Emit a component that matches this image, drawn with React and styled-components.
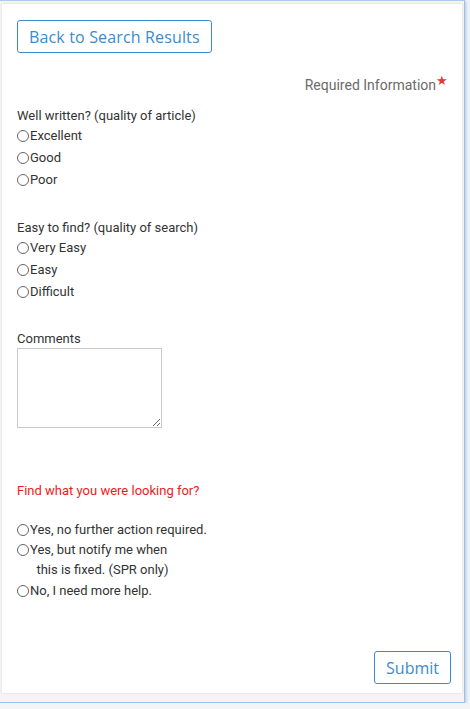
import styled, { createGlobalStyle } from "styled-components";

const GlobalStyle = createGlobalStyle`
  html, body {
    margin: 0;
    padding: 0;
    background: #f3f4f5;
  }
  body {
    font-family: Roboto, "Liberation Sans", sans-serif;
  }
`;

const Frame = styled.div`
  width: 465px;
  height: 703px;
  box-sizing: border-box;
  border-top: 1px solid #aacbeb;
  border-right: 1px solid #9cc1e6;
  border-bottom: 1px solid #9cc1e6;
  box-shadow: 1px 1px 3px rgba(120, 170, 220, 0.6);
  background: #f4f4f4;
  padding: 3px 2px 9px 2px;
`;

const Card = styled.form`
  height: 100%;
  box-sizing: border-box;
  background: #fff;
  box-shadow: 0 0 2px rgba(0, 0, 0, 0.12);
  padding: 16px 11px 9px 15px;
  display: flex;
  flex-direction: column;
  color: #333;
  font-size: 13px;
`;

const OutlineButton = styled.button`
  align-self: ${(p) => (p.$right ? "flex-end" : "flex-start")};
  font-family: "Open Sans", Roboto, sans-serif;
  font-size: 16px;
  letter-spacing: ${(p) => (p.$right ? 0 : 0.15)}px;
  color: #3a8ccc;
  background: #fff;
  border: 1px solid #3a8ccc;
  border-radius: 3px;
  height: 33px;
  padding: 0 ${(p) => (p.$right ? 11 : 11)}px;
  cursor: pointer;
`;

const Required = styled.div`
  align-self: flex-end;
  margin-top: 24px;
  margin-right: 3px;
  font-size: 14px;
  color: #6b6b6b;
  display: flex;
  align-items: flex-start;
`;

const Star = styled.span`
  color: #e03a3a;
  font-size: 13px;
  line-height: 1;
  margin-top: -3px;
`;

const Group = styled.fieldset`
  border: none;
  margin: ${(p) => p.$top}px 0 0 0;
  padding: 0;
  display: flex;
  flex-direction: column;
`;

const Question = styled.div`
  color: ${(p) => (p.$alert ? "#f01a1a" : "#333")};
  line-height: 17px;
  margin-bottom: ${(p) => p.$gap ?? 3}px;
`;

const Option = styled.label`
  display: flex;
  align-items: flex-start;
  line-height: ${(p) => p.$line || 17}px;
  margin-bottom: ${(p) => p.$gap ?? 5}px;
  color: #333;

  input {
    margin-top: ${(p) => ((p.$line || 17) - 13) / 2 + 0.5}px;
  }
`;

const Radio = styled.input.attrs({ type: "radio" })`
  appearance: none;
  width: 12px;
  height: 12px;
  margin: 2px 1px 0 0;
  border: 1px solid #666;
  border-radius: 50%;
  background: #fff;
  flex: none;
`;

const Comments = styled.textarea`
  width: 145px;
  height: 80px;
  box-sizing: border-box;
  border: 1px solid #c8c8c8;
  margin: 1px 0 0 0;
  resize: both;
`;

const Spacer = styled.div`
  flex: 1;
`;

export default function App() {
  return (
    <>
      <GlobalStyle />
      <Frame>
        <Card onSubmit={(e) => e.preventDefault()}>
          <OutlineButton type="button">Back to Search Results</OutlineButton>
          <Required>
            Required Information<Star>★</Star>
          </Required>

          <Group $top={14}>
            <Question>Well written? (quality of article)</Question>
            <Option><Radio name="written" />Excellent</Option>
            <Option><Radio name="written" />Good</Option>
            <Option><Radio name="written" />Poor</Option>
          </Group>

          <Group $top={26}>
            <Question>Easy to find? (quality of search)</Question>
            <Option><Radio name="find" />Very Easy</Option>
            <Option><Radio name="find" />Easy</Option>
            <Option><Radio name="find" />Difficult</Option>
          </Group>

          <Group $top={25}>
            <Question $gap={0}>Comments</Question>
            <Comments />
          </Group>

          <Group $top={54}>
            <Question $alert $gap={21}>Find what you were looking for?</Question>
            <Option $line={20} $gap={0}><Radio name="found" />Yes, no further action required.</Option>
            <Option $line={20} $gap={1}>
              <Radio name="found" />
              <span>
                Yes, but notify me when
                <br />
                &nbsp;&nbsp;this is fixed. (SPR only)
              </span>
            </Option>
            <Option $line={20}><Radio name="found" />No, I need more help.</Option>
          </Group>

          <Spacer />
          <OutlineButton type="submit" $right>Submit</OutlineButton>
        </Card>
      </Frame>
    </>
  );
}
